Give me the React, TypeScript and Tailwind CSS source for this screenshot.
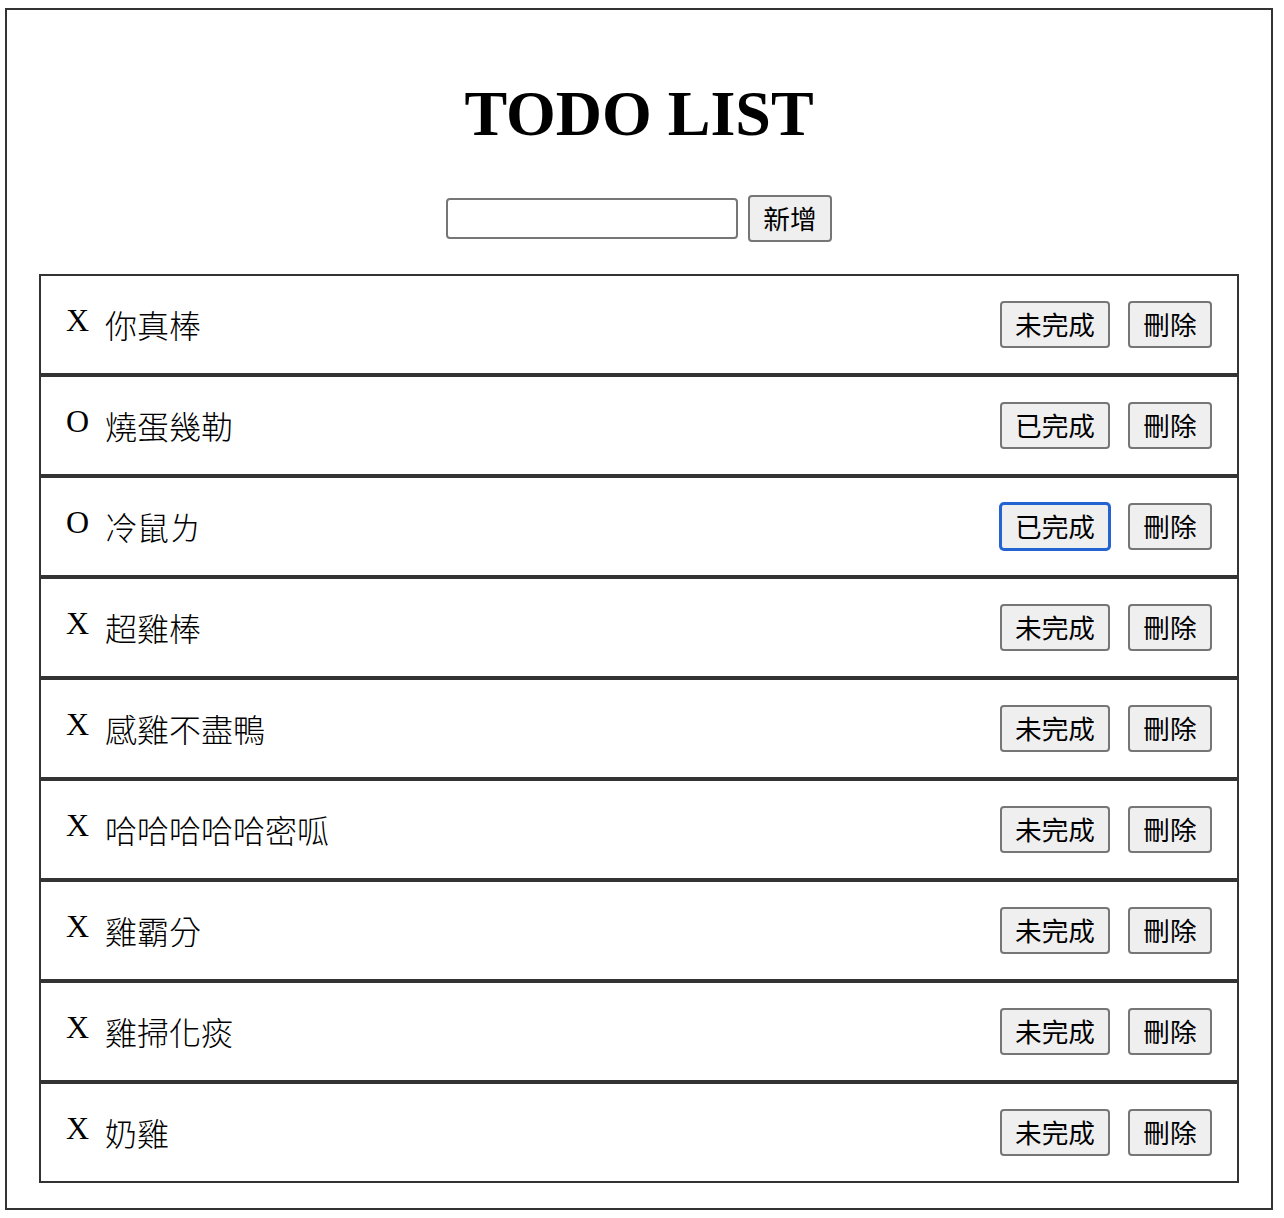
import React from "react";

const items: { done: boolean; text: string; focus?: boolean }[] = [
  { done: false, text: "你真棒" },
  { done: true, text: "燒蛋幾勒" },
  { done: true, text: "冷鼠ㄌ", focus: true },
  { done: false, text: "超雞棒" },
  { done: false, text: "感雞不盡鴨" },
  { done: false, text: "哈哈哈哈哈密呱" },
  { done: false, text: "雞霸分" },
  { done: false, text: "雞掃化痰" },
  { done: false, text: "奶雞" },
];

const btnFont = { fontFamily: '"Noto Sans CJK TC", "Noto Sans", sans-serif' };

export default function App() {
  return (
    <div className="bg-white w-[1284px] h-[1218px] pt-[8px] pl-[5px]">
      <div className="w-[1268px] h-[1202px] border-2 border-[#333333] px-[32px] flex flex-col">
        <h1
          className="mt-[68px] text-center text-[64px] font-bold leading-[71px] text-black"
          style={{ fontFamily: '"Liberation Serif", "Times New Roman", serif' }}
        >
          TODO LIST
        </h1>
        <div className="mt-[46px] flex items-center justify-center gap-[10px]">
          <input
            type="text"
            className="w-[292px] h-[41px] border-2 border-[#767676] rounded-[4px] bg-white outline-none"
          />
          <button
            className="h-[47px] w-[84px] border-2 border-[#767676] rounded-[4px] bg-[#efefef] text-[26.67px] leading-none text-black flex items-center justify-center"
            style={btnFont}
          >
            新增
          </button>
        </div>
        <ul className="mt-[32px] flex flex-col">
          {items.map((it, i) => (
            <li
              key={i}
              className="h-[101px] border-2 border-[#333333] px-[25px] flex items-center justify-between"
            >
              <div className="flex items-start">
                <span
                  className="text-[32px] leading-none text-black w-[39px] mt-[-6px]"
                  style={{ fontFamily: '"Liberation Serif", "Times New Roman", serif' }}
                >
                  {it.done ? "O" : "X"}
                </span>
                <span
                  className="text-[32px] leading-none text-black font-light mt-[-2px]"
                  style={{ fontFamily: '"Noto Sans CJK TC", "Noto Sans CJK SC", serif' }}
                >
                  {it.text}
                </span>
              </div>
              <div className="flex items-center gap-[18px]">
                <button
                  className={
                    "h-[47px] w-[110px] border-2 rounded-[4px] bg-[#efefef] text-[26.67px] leading-none text-black flex items-center justify-center " +
                    (it.focus
                      ? "border-[#2463d2] shadow-[0_0_0_1px_#2463d2]"
                      : "border-[#767676]")
                  }
                  style={btnFont}
                >
                  {it.done ? "已完成" : "未完成"}
                </button>
                <button
                  className="h-[47px] w-[84px] border-2 border-[#767676] rounded-[4px] bg-[#efefef] text-[26.67px] leading-none text-black flex items-center justify-center"
                  style={btnFont}
                >
                  刪除
                </button>
              </div>
            </li>
          ))}
        </ul>
      </div>
    </div>
  );
}
